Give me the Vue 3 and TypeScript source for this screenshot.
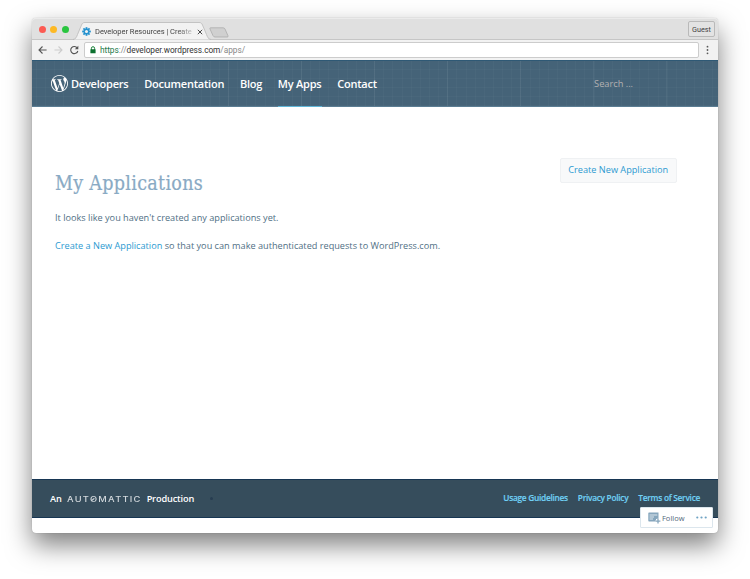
<script setup lang="ts">
interface Link {
  label: string
  active?: boolean
}

const nav: Link[] = [
  { label: 'Documentation' },
  { label: 'Blog' },
  { label: 'My Apps', active: true },
  { label: 'Contact' },
]

const footerLinks: string[] = ['Usage Guidelines', 'Privacy Policy', 'Terms of Service']
const gearAngles: number[] = [0, 45, 90, 135]
</script>

<template>
  <div class="stage">
    <div class="window">
      <div class="tabstrip">
        <div class="lights"><i class="red" /><i class="amber" /><i class="green" /></div>
        <div class="tab">
          <svg class="tab-shape" width="138" height="21" viewBox="0 0 138 21">
            <path d="M0 20.5C3 20 3.500 18 4.500 15.500L8.500 6C9.500 4 10 3.500 12 3.500H126C128 3.500 128.500 4 129.500 6L133.500 15.500C134.500 18 135 20 138 20.500V21H0Z" fill="#f2f2f2" stroke="#b9b9b9" stroke-width="0.8" />
          </svg>
          <svg class="gear" width="9" height="9" viewBox="-5 -5 10 10">
            <rect v-for="a in gearAngles" :key="a" x="-1" y="-4.800" width="2" height="9.600" :transform="`rotate(${a})`" fill="#2492cf" />
            <circle r="3.300" fill="#2492cf" /><circle r="1.700" fill="#f2f2f2" />
          </svg>
          <span class="tab-title">Developer Resources | Create</span>
          <svg class="close" width="6" height="6" viewBox="0 0 6 6"><path d="M.8.8 5.200 5.200M5.200.8.8 5.200" stroke="#4a4a4a" stroke-width="1" /></svg>
        </div>
        <svg class="newtab" width="20" height="11" viewBox="0 0 20 11"><path d="M1.500.8H14Q15.500.8 16 2L19 8.800Q19.400 10 18.300 10H6Q4.700 10 4.100 8.800L1 2Q.5.8 1.500.8Z" fill="#d0d0d0" stroke="#acacac" stroke-width=".8" /></svg>
        <span class="guest">Guest</span>
      </div>
      <div class="toolbar">
        <svg class="controls" width="41" height="10" viewBox="0 0 41 10" fill="none" stroke-width="1.100">
          <path d="M8.600 5H1M4.500 1.500 1 5l3.500 3.500" stroke="#555" />
          <path d="M16.500 5H24M20.500 1.500 24 5l-3.500 3.500" stroke="#ccc" />
          <path d="M39.300 3A3.600 3.600 0 1 0 39.800 6" stroke="#555" /><path d="M40.300.8V4.300H36.800Z" fill="#555" />
        </svg>
        <div class="address">
          <svg width="6" height="8" viewBox="0 0 6 8"><path d="M1.400 4V2.300a1.600 1.600 0 0 1 3.200 0V4" fill="none" stroke="#188038" stroke-width="1" /><rect x=".4" y="3.300" width="5.200" height="4" rx=".5" fill="#0d7130" /></svg>
          <span class="url"><b>https</b>://<em>developer.wordpress.com</em>/apps/</span>
        </div>
        <svg class="more" width="3" height="10" viewBox="0 0 3 10" fill="#5a5a5a"><circle cx="1.500" cy="1.700" r=".9" /><circle cx="1.500" cy="5" r=".9" /><circle cx="1.500" cy="8.300" r=".9" /></svg>
      </div>

      <header class="header">
        <a class="brand">
          <svg width="17" height="17" viewBox="0 0 24 24" fill="#fff"><path d="M21.469 6.825c.84 1.537 1.318 3.300 1.318 5.175 0 3.979-2.156 7.456-5.363 9.325l3.295-9.527c.615-1.540.82-2.771.82-3.864 0-.405-.026-.78-.07-1.110m-7.981.105c.647-.03 1.232-.105 1.232-.105.582-.075.514-.93-.067-.899 0 0-1.755.135-2.880.135-1.064 0-2.850-.15-2.850-.15-.585-.03-.661.855-.075.885 0 0 .54.061 1.125.09l1.680 4.605-2.370 7.080L5.354 6.900c.649-.03 1.234-.1 1.234-.1.585-.075.516-.93-.065-.896 0 0-1.746.138-2.874.138-.2 0-.438-.008-.69-.015C4.911 3.150 8.235 1.215 12 1.215c2.809 0 5.365 1.072 7.286 2.833-.046-.003-.091-.009-.141-.009-1.060 0-1.812.923-1.812 1.914 0 .89.513 1.643 1.060 2.531.411.72.89 1.643.89 2.977 0 .915-.354 1.994-.821 3.479l-1.075 3.585-3.900-11.610.001.014zM12 22.784c-1.059 0-2.081-.153-3.048-.437l3.237-9.406 3.315 9.087c.024.053.05.101.078.149-1.120.393-2.325.609-3.582.609M1.211 12c0-1.564.336-3.050.935-4.390L7.290 21.709C3.694 19.960 1.212 16.271 1.211 12M12 0C5.385 0 0 5.385 0 12s5.385 12 12 12 12-5.385 12-12S18.615 0 12 0" /></svg>
          <span>Developers</span>
        </a>
        <nav>
          <a v-for="item in nav" :key="item.label" :class="{ active: item.active }">{{ item.label }}</a>
        </nav>
        <span class="search">Search ...</span>
      </header>

      <main>
        <section>
          <h1>My Applications</h1>
          <p>It looks like you haven't created any applications yet.</p>
          <p><a>Create a New Application</a> so that you can make authenticated requests to WordPress.com.</p>
        </section>
        <a class="create">Create New Application</a>
      </main>

      <footer>
        <span class="credit">An <span class="automattic"><span class="wordmark">AUT<span class="slashed">O</span>MATTIC</span></span> Production</span>
        <i class="stat" />
        <div class="links"><a v-for="l in footerLinks" :key="l">{{ l }}</a></div>
      </footer>

      <div class="follow">
        <svg width="13" height="12" viewBox="0 0 13 12">
          <path d="M1 .5H10.500V7H8V9.500H1Q.3 9.500.3 8.800V1.200Q.3.5 1 .5Z" fill="#86a6bd" />
          <path d="M1.500 3H9.300M1.500 5H6M1.500 7H5" stroke="#f4f8fa" stroke-width=".8" />
          <path d="M10 6.800V11.600M7.600 9.200H12.400" stroke="#fff" stroke-width="2.600" />
          <path d="M10 6.800V11.600M7.600 9.200H12.400" stroke="#86a6bd" stroke-width="1.300" />
        </svg>
        <span>Follow</span>
        <svg class="dots" width="11" height="3" viewBox="0 0 11 3" fill="#6fa3c4"><circle cx="1.300" cy="1.500" r="1.100" /><circle cx="5.500" cy="1.500" r="1.100" /><circle cx="9.700" cy="1.500" r="1.100" /></svg>
      </div>
    </div>
  </div>
</template>

<style>
body {
  background: #fff;
}
</style>

<style scoped>
* {
  box-sizing: border-box;
}
.stage {
  width: 750px;
  height: 579px;
  padding: 18px 32px 0;
  overflow: hidden;
  font-family: 'Open Sans', sans-serif;
  white-space: nowrap;
}
svg {
  display: block;
  flex: none;
}
.window {
  position: relative;
  width: 686px;
  height: 515px;
  display: flex;
  flex-direction: column;
  background: #fff;
  border-radius: 4px;
  box-shadow: 0 12px 26px rgba(0, 0, 0, 0.5), 0 0 1px rgba(0, 0, 0, 0.35);
}
.tabstrip {
  height: 22px;
  display: flex;
  border-radius: 4px 4px 0 0;
  background: #e0e0e0;
  border-top: 1px solid #ebebeb;
  border-bottom: 1px solid #c6c6c6;
}
.lights {
  display: flex;
  gap: 4.500px;
  padding: 7px 0 0 6.500px;
  width: 41px;
}
.lights i {
  flex: none;
  width: 7px;
  height: 7px;
  border-radius: 50%;
}
.red { background: #fc5b53; }
.amber { background: #fdb924; }
.green { background: #29c53f; }
.tab {
  position: relative;
  display: flex;
  align-items: center;
  width: 138px;
  height: 21px;
  padding: 4px 0 0 9px;
}
.tab-shape {
  position: absolute;
  left: 0;
  top: 0;
}
.gear {
  position: relative;
}
.tab-title {
  position: relative;
  width: 98px;
  margin-left: 4px;
  font: 7.500px/12px Roboto, sans-serif;
  letter-spacing: -0.03px;
  color: #444;
  mask-image: linear-gradient(to right, #000 84%, rgba(0, 0, 0, 0.25) 99%);
}
.close {
  position: relative;
  margin-left: 3.500px;
}
.newtab {
  margin: 8px 0 0 -2px;
}
.guest {
  width: 27px;
  height: 16px;
  margin: 2px 3px 0 auto;
  border: 1px solid #b9b9b9;
  border-radius: 2px;
  background: #e3e3e3;
  font: 7.300px/15px Roboto, sans-serif;
  text-align: center;
  color: #444;
}
.toolbar {
  height: 20px;
  display: flex;
  align-items: center;
  padding-left: 5.500px;
  background: #f2f2f2;
}
.address {
  display: flex;
  align-items: center;
  width: 615px;
  height: 16px;
  margin-left: 5px;
  padding-left: 5px;
  border: 1px solid #ccc;
  border-radius: 2px;
  background: #fff;
}
.url {
  margin-left: 4.500px;
  font: 8.300px/14px Roboto, sans-serif;
  letter-spacing: -0.05px;
  color: #888;
}
.url b {
  font-weight: 400;
  color: #22794a;
}
.url em {
  font-style: normal;
  color: #333;
}
.more {
  margin-left: 7.500px;
}
.header {
  height: 47px;
  display: flex;
  align-items: center;
  padding-left: 19px;
  border-top: 1px solid #2f5975;
  border-bottom: 1px solid #5b7d93;
  background:
    repeating-linear-gradient(90deg, transparent 0 50px, rgba(255, 255, 255, 0.05) 50px 51px, transparent 51px 73px),
    repeating-linear-gradient(90deg, transparent 0 4px, rgba(255, 255, 255, 0.025) 4px 5px, transparent 5px 9.140px),
    repeating-linear-gradient(180deg, transparent 0 8px, rgba(255, 255, 255, 0.025) 8px 9px),
    #456378;
  color: #fff;
  font-size: 11px;
  font-weight: 600;
  letter-spacing: -0.220px;
}
.brand,
nav {
  display: flex;
  align-items: center;
  height: 100%;
}
.brand {
  gap: 3px;
}
nav {
  gap: 15.700px;
  margin-left: 15.700px;
}
nav a {
  display: flex;
  align-items: center;
  height: 47px;
  border-bottom: 1px solid transparent;
}
nav .active {
  border-color: #5fb6d8;
}
.search {
  margin: 0 85px 0 auto;
  color: #b3b1b2;
  font-size: 9.300px;
  font-weight: 500;
  letter-spacing: -0.03px;
}
main {
  height: 372px;
  display: flex;
  justify-content: space-between;
  align-items: flex-start;
  padding: 51px 41.500px 0 23px;
  font-size: 9.170px;
  line-height: 14px;
  color: #506f85;
}
h1 {
  margin: 14px 0 15px;
  font: 19.500px/24px 'DejaVu Serif Condensed', 'DejaVu Serif', serif;
  font-stretch: condensed;
  letter-spacing: 0.3px;
  color: #89aac4;
  -webkit-text-stroke: 0.2px #89aac4;
}
p {
  margin: 0 0 14px;
}
main a {
  color: #2c9ad1;
}
.create {
  width: 116.500px;
  height: 25px;
  border: 1px solid #eff1f3;
  border-radius: 2px;
  background: #f8f9fa;
  line-height: 22px;
  text-align: center;
}
footer {
  height: 39px;
  display: flex;
  align-items: center;
  padding: 0 18px;
  border-top: 1px solid #173653;
  border-bottom: 1px solid #173653;
  background: #364d5c;
  color: #fff;
  font-size: 9.200px;
  font-weight: 600;
  letter-spacing: -0.150px;
}
.credit {
  display: flex;
  align-items: center;
  gap: 5px;
}
.automattic {
  width: 75px;
  padding-top: 2px;
  font: 500 7px/10px Inter, sans-serif;
  letter-spacing: 0.950px;
  color: #d3d9dd;
}
.wordmark {
  display: block;
  width: 60px;
  transform: scaleX(1.33);
  transform-origin: left;
}
.slashed {
  position: relative;
}
.slashed::after {
  content: '';
  position: absolute;
  left: 1.200px;
  top: 4px;
  width: 3px;
  height: 1px;
  background: #d3d9dd;
  transform: rotate(-45deg);
}
.stat {
  width: 3px;
  height: 3px;
  margin-left: 16px;
  border-radius: 50%;
  background: #273d51;
}
.links {
  display: flex;
  gap: 10px;
  margin: -2px 0 0 auto;
  color: #70d0f4;
  font-size: 8.300px;
  letter-spacing: -0.270px;
  -webkit-text-stroke: 0.15px #70d0f4;
}
.follow {
  position: absolute;
  left: 608px;
  top: 489px;
  width: 73px;
  height: 21px;
  display: flex;
  align-items: center;
  padding: 0 5.500px 0 7px;
  border: 1px solid #dce6ed;
  border-radius: 1px;
  background: #fff;
  font: 7.500px/12px 'Open Sans', sans-serif;
  color: #52687a;
}
.follow span {
  margin-left: 1px;
}
.dots {
  margin-left: auto;
}
</style>
